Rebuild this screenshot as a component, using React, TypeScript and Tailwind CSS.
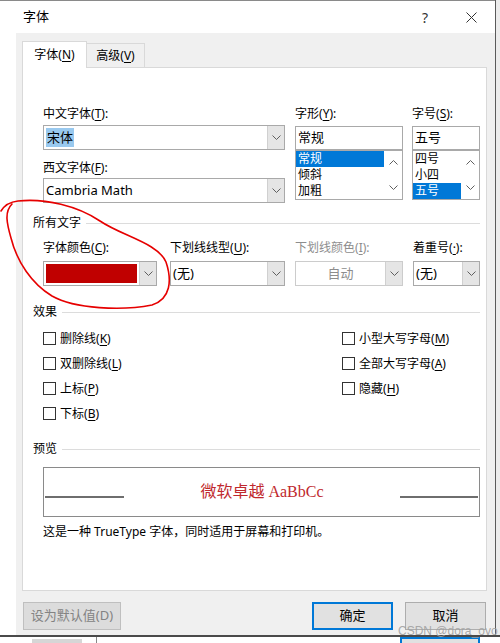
import clsx from "clsx";
import type { ReactNode } from "react";

const sans = "font-['Noto_Sans','Noto_Sans_CJK_SC',sans-serif]";

function Key({ children }: { children: ReactNode }) {
  return <span className="underline underline-offset-[2px]">{children}</span>;
}

function Label({ text, k, className, muted }: { text: string; k: string; className?: string; muted?: boolean }) {
  return (
    <div className={clsx("h-[16px] whitespace-nowrap text-[12px] leading-[16px]", muted ? "text-[#8d8d8d]" : "text-black", className)}>
      {text}(<Key>{k}</Key>):
    </div>
  );
}

function Chevron({ up }: { up?: boolean }) {
  return (
    <svg width="9" height="5" viewBox="0 0 9 5">
      <path
        d={up ? "M0.5 4.5 L4.5 0.5 L8.5 4.5" : "M0.5 0.5 L4.5 4.5 L8.5 0.5"}
        fill="none"
        stroke="#5f5f5f"
        strokeWidth="1"
      />
    </svg>
  );
}

function DropButton() {
  return (
    <div className="flex h-full w-[17px] shrink-0 items-center justify-center border-l border-[#d0d0d0] bg-[#e5e5e5]">
      <Chevron />
    </div>
  );
}

function Combo({ children, className, disabled }: { children?: ReactNode; className?: string; disabled?: boolean }) {
  return (
    <div className={clsx("flex h-[25px] border bg-white", disabled ? "border-[#cccccc]" : "border-[#a9a9a9]", className)}>
      <div className="flex min-w-0 flex-1 items-center px-[2px] text-[13px] text-black">{children}</div>
      <DropButton />
    </div>
  );
}

function ListBox({ items, selected }: { items: string[]; selected: number }) {
  return (
    <div className="flex h-[50px] overflow-hidden border border-[#a9a9a9] bg-white">
      <div className="flex-1">
        {items.map((it, i) => (
          <div
            key={it}
            className={clsx(
              "flex h-[16px] items-center pl-[2px] text-[12px] leading-[16px]",
              i === selected ? "bg-[#0078d7] text-white" : "text-black"
            )}
          >
            {it}
          </div>
        ))}
      </div>
      <div className="flex w-[18px] flex-col items-center justify-between py-[9px]">
        <Chevron up />
        <Chevron />
      </div>
    </div>
  );
}

function Section({ title, className }: { title: string; className?: string }) {
  return (
    <div className={clsx("flex h-[16px] items-center", className)}>
      <span className="text-[12px] leading-[16px] text-black">{title}</span>
      <div className="ml-[5px] h-px flex-1 bg-[#dcdcdc]" />
    </div>
  );
}

function Check({ text, k }: { text: string; k: string }) {
  return (
    <div className="flex h-[25px] items-center">
      <div className="h-[13px] w-[13px] border border-[#333333] bg-white" />
      <span className="ml-[4px] text-[12px] text-black">
        {text}(<Key>{k}</Key>)
      </span>
    </div>
  );
}

function Button({ children, className }: { children: ReactNode; className?: string }) {
  return (
    <div className={clsx("flex h-[28px] items-center justify-center text-[13px]", className)}>{children}</div>
  );
}

export default function App() {
  return (
    <div className={clsx("relative h-[643px] w-[500px] overflow-hidden bg-[#ececec]", sans)}>
      <div className="flex">
        <div className="w-[495px]">
          {/* title bar */}
          <div className="flex h-[33px] items-center border-t border-[#8a8a8a] bg-white">
            <span className="ml-[23px] text-[13px] text-black">字体</span>
            <span className="ml-auto mr-[38px] text-[14px] text-[#333]">?</span>
            <svg width="11" height="11" viewBox="0 0 11 11" className="mr-[18px]">
              <path d="M0.5 0.5 L10.5 10.5 M10.5 0.5 L0.5 10.5" stroke="#333" strokeWidth="1" />
            </svg>
          </div>

          <div className="flex h-[602px]">
            <div className="w-[16px] bg-white" />
            <div className="flex flex-1 flex-col bg-[#f0f0f0] pl-[6px] pr-[8px] pt-[8px]">
              {/* tabs */}
              <div className="relative z-10 flex h-[27px] items-start">
                <div className="flex h-[27px] w-[65px] items-center justify-center border-x border-t border-[#d9d9d9] bg-white text-[12px] text-black">
                  字体(<Key>N</Key>)
                </div>
                <div className="mt-[2px] flex h-[24px] w-[58px] items-center justify-center border-r border-t border-[#d9d9d9] bg-[#f0f0f0] text-[12px] text-black">
                  高级(<Key>V</Key>)
                </div>
              </div>

              {/* panel */}
              <div className="-mt-px flex h-[524px] flex-col border border-[#d9d9d9] bg-white pl-[10px] pr-[6px]">
                <div className="ml-[10px] mt-[38px] flex">
                  <div className="w-[242px]">
                    <Label text="中文字体" k="T" />
                    <Combo className="mt-[3px]">
                      <span className="bg-[#99c9ef] px-px">宋体</span>
                    </Combo>
                    <Label text="西文字体" k="F" className="mt-[10px]" />
                    <Combo className="mt-[2px]">Cambria Math</Combo>
                  </div>
                  <div className="ml-[10px] w-[108px]">
                    <Label text="字形" k="Y" />
                    <div className="mt-[4px] flex h-[24px] items-center border border-[#a9a9a9] bg-white px-[2px] text-[13px] text-black">
                      常规
                    </div>
                    <ListBox items={["常规", "倾斜", "加粗"]} selected={0} />
                  </div>
                  <div className="ml-[9px] w-[68px]">
                    <Label text="字号" k="S" />
                    <div className="mt-[4px] flex h-[24px] items-center border border-[#a9a9a9] bg-white px-[2px] text-[13px] text-black">
                      五号
                    </div>
                    <ListBox items={["四号", "小四", "五号"]} selected={2} />
                  </div>
                </div>

                <Section title="所有文字" className="mt-[12px]" />

                <div className="ml-[10px] mt-[9px] flex">
                  <div className="w-[114px]">
                    <Label text="字体颜色" k="C" />
                    <div className="mt-[5px] flex h-[25px] border border-[#a9a9a9] bg-white">
                      <div className="flex-1 p-[2px]">
                        <div className="h-full w-full bg-[#c00000]" />
                      </div>
                      <DropButton />
                    </div>
                  </div>
                  <div className="ml-[13px] w-[115px]">
                    <Label text="下划线线型" k="U" />
                    <Combo className="mt-[5px]">(无)</Combo>
                  </div>
                  <div className="ml-[10px] w-[108px]">
                    <Label text="下划线颜色" k="I" muted />
                    <Combo className="mt-[5px]" disabled>
                      <span className="w-full text-center text-[#8d8d8d]">自动</span>
                    </Combo>
                  </div>
                  <div className="ml-[10px] w-[67px]">
                    <Label text="着重号" k="·" />
                    <Combo className="mt-[5px]">(无)</Combo>
                  </div>
                </div>

                <Section title="效果" className="mt-[18px]" />

                <div className="ml-[10px] mt-[6px] flex">
                  <div className="w-[299px]">
                    <Check text="删除线" k="K" />
                    <Check text="双删除线" k="L" />
                    <Check text="上标" k="P" />
                    <Check text="下标" k="B" />
                  </div>
                  <div>
                    <Check text="小型大写字母" k="M" />
                    <Check text="全部大写字母" k="A" />
                    <Check text="隐藏" k="H" />
                  </div>
                </div>

                <Section title="预览" className="mt-[15px]" />

                <div className="ml-[10px] mt-[10px] flex h-[50px] items-center border border-[#8a8a8a] bg-white px-px">
                  <div className="mt-[10px] h-[2px] w-[79px] bg-[#6e6e6e]" />
                  <div className="flex-1 text-center font-['Liberation_Serif','Noto_Sans_CJK_SC',serif] text-[16px] text-[#c0282d]">
                    微软卓越 AaBbCc
                  </div>
                  <div className="mt-[10px] h-[2px] w-[78px] bg-[#6e6e6e]" />
                </div>

                <div className="ml-[10px] mt-[7px] text-[12px] leading-[16px] text-black">
                  这是一种 TrueType 字体，同时适用于屏幕和打印机。
                </div>
              </div>

              {/* buttons */}
              <div className="mt-[11px] flex pl-px">
                <Button className="w-[98px] border border-[#bfbfbf] bg-[#dcdcdc] text-[#838383]">
                  设为默认值(D)
                </Button>
                <Button className="ml-auto w-[81px] border-2 border-[#0078d7] bg-[#e1e1e1] text-black">确定</Button>
                <Button className="ml-[12px] mr-px w-[81px] border border-[#adadad] bg-[#e1e1e1] text-black">
                  取消
                </Button>
              </div>
            </div>
          </div>
        </div>
        <div className="w-px bg-[#5a5a5a]" />
        <div className="flex-1 bg-[#ececec]" />
      </div>

      {/* background window fragment */}
      <div className="h-[2px] bg-[#4a4a4a]" />
      <div className="flex h-[6px] overflow-hidden bg-white">
        <div className="w-[16px]" />
        <div className="ml-[16px] mt-[2px] h-[4px] w-[50px] bg-[#d6d6d6]" />
        <div className="ml-[14px] w-px bg-[#888]" />
        <div className="ml-auto mr-[20px] w-[80px] border-x-2 border-t-2 border-[#0078d7] bg-[#e1e1e1]" />
      </div>

      {/* red hand-drawn annotation */}
      <svg className="pointer-events-none absolute left-0 top-0" width="500" height="643" viewBox="0 0 500 643">
        <path
          d="M1 211 C4 206 9 202 18 201 C45 198 78 206 100 221 C122 236 158 243 166 262 C172 280 171 299 152 305 C122 311 75 309 52 296 C32 284 17 262 11 238 C7 224 4 212 12 204"
          fill="none"
          stroke="#e60000"
          strokeWidth="1.6"
          strokeLinecap="round"
        />
      </svg>

      {/* watermark */}
      <div className="pointer-events-none absolute left-[398px] top-[622px] font-['Liberation_Sans',sans-serif] text-[12px] text-[#a0a0a0]/90">
        CSDN @dora_ovo
      </div>
    </div>
  );
}
